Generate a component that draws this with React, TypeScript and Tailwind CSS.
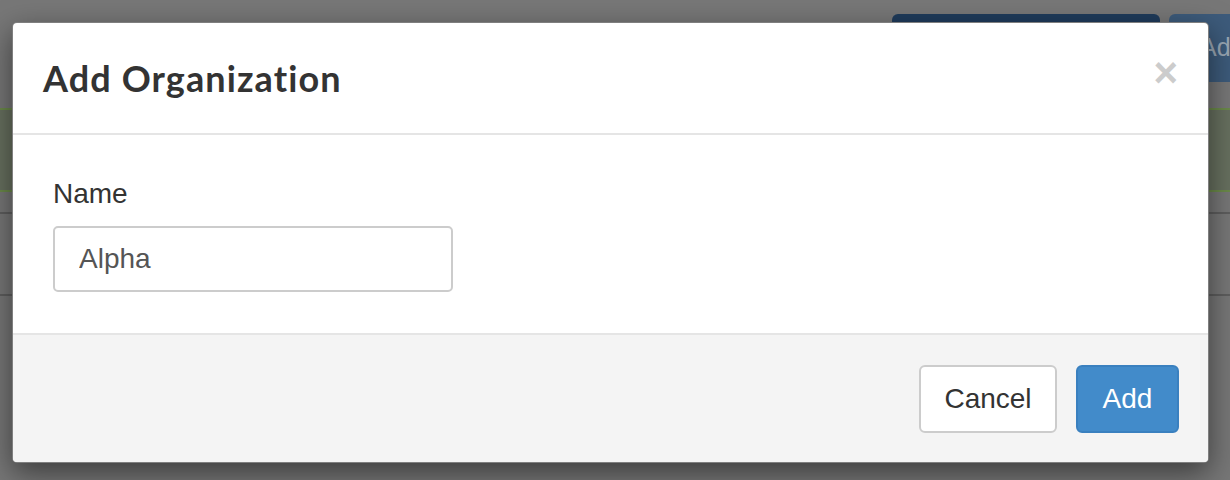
import React from 'react';

const sans = { fontFamily: '"Liberation Sans", Arial, sans-serif' };

export default function App() {
  return (
    <div className="relative h-[480px] w-[1230px] overflow-hidden bg-[#777777]" style={sans}>
      {/* page behind the backdrop */}
      <div className="flex justify-end gap-[9px] pt-[14px]">
        <div className="h-[68px] w-[268px] rounded-[6px] bg-[#1f3b5b]" />
        <div className="flex h-[68px] w-[61px] items-center rounded-l-[6px] bg-[#3d5b7b] pl-[31px] text-[25px] text-[#9aa7b4] whitespace-nowrap">
          Ad
        </div>
      </div>
      <div className="mt-[26px] h-[84px] border-y-2 border-[#6b8a4a] bg-[#67705f]" />
      <div className="mt-[20px] border-t-2 border-[#5e5e5e]" />
      <div className="mt-[80px] border-t-2 border-[#5e5e5e]" />

      {/* modal */}
      <div className="absolute left-[12px] top-[22px] w-[1197px] overflow-hidden rounded-[5px] border border-black/50 bg-white shadow-[0_10px_30px_rgba(0,0,0,0.5)]">
        <div className="flex h-[112px] items-center justify-between border-b-2 border-[#e5e5e5] pl-[30px] pr-[30px]">
          <h4
            className="text-[36px] font-bold leading-[40px] tracking-[1.1px] text-[#333333]"
            style={{ fontFamily: 'Lato, "Open Sans", sans-serif' }}
          >
            Add Organization
          </h4>
          <button className="-mt-[10px] text-[42px] font-bold leading-none text-[#cccccc]">×</button>
        </div>

        <div className="border-b-2 border-[#e5e5e5] px-[40px] pb-[41px] pt-[39px]">
          <label className="mb-[12px] block text-[28px] leading-[40px] text-[#333333]">Name</label>
          <input
            defaultValue="Alpha"
            className="block h-[66px] w-[400px] rounded-[5px] border-2 border-[#cccccc] px-[24px] text-[28px] text-[#555555] outline-none"
            style={sans}
          />
        </div>

        <div className="flex justify-end gap-[19px] bg-[#f4f4f4] pb-[29px] pl-[30px] pr-[29px] pt-[30px]">
          <button className="h-[68px] w-[138px] rounded-[6px] border-2 border-[#cccccc] bg-white text-[28px] text-[#333333]">
            Cancel
          </button>
          <button className="h-[68px] w-[103px] rounded-[6px] border-2 border-[#3a80bf] bg-[#428bca] text-[28px] text-white">
            Add
          </button>
        </div>
      </div>
    </div>
  );
}
